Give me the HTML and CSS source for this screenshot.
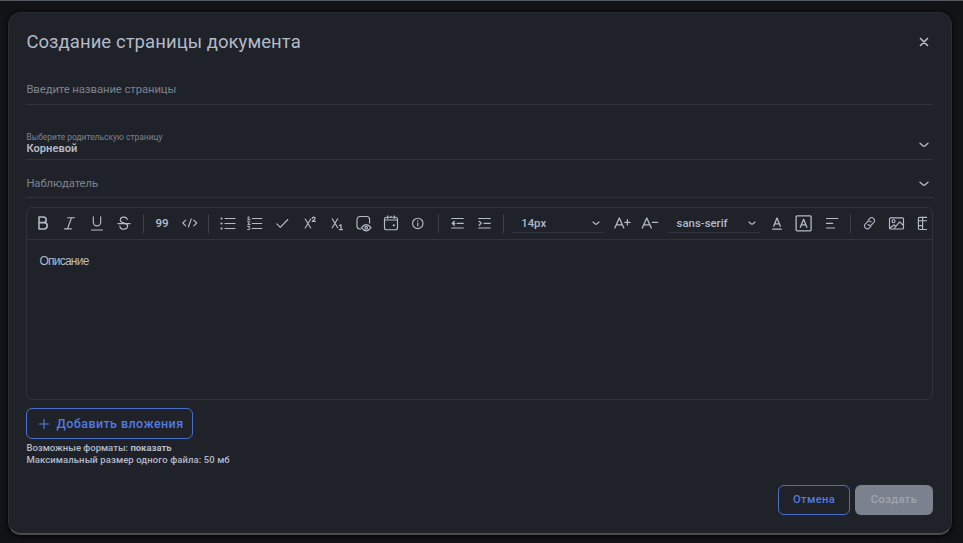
FILE: index.html
```html
<!DOCTYPE html>
<html lang="ru">
<head>
<meta charset="utf-8">
<title>Создание страницы документа</title>
<link rel="stylesheet" href="styles.css">
</head>
<body>
<main class="dialog">
  <header class="header">
    <h1 class="title">Создание страницы документа</h1>
    <svg class="close" viewBox="0 0 10 10"><path d="M1.5 1.5l7 7M8.5 1.5l-7 7"/></svg>
  </header>
  <div class="field field-name"><span class="placeholder name-text">Введите название страницы</span></div>
  <div class="field field-parent">
    <div class="stack"><span class="label">Выберите родительскую страницу</span><span class="value">Корневой</span></div>
    <svg class="chevron" viewBox="0 0 10 6"><path d="M1 1.2l2.6 2.4q1.4 1 2.8 0L9 1.2"/></svg>
  </div>
  <div class="field field-watcher">
    <span class="placeholder watcher-text">Наблюдатель</span>
    <svg class="chevron" viewBox="0 0 10 6"><path d="M1 1.2l2.6 2.4q1.4 1 2.8 0L9 1.2"/></svg>
  </div>
  <section class="editor">
    <div class="toolbar">
      <span class="tool"><svg viewBox="0 0 20 20"><path class="bold" d="M6 4h4.4a2.8 2.8 0 0 1 0 5.6H6zM6 9.6h5a3.2 3.2 0 0 1 0 6.4H6z"/></svg></span>
      <span class="tool"><svg viewBox="0 0 20 20"><path d="M7.5 4.7h7M4.5 15.8h7M11.5 4.7l-4 11.1"/></svg></span>
      <span class="tool"><svg viewBox="0 0 20 20"><path d="M6.3 3.7V9a3.7 3.9 0 0 0 7.4 0V3.7M4.5 17h11"/></svg></span>
      <span class="tool"><svg viewBox="0 0 20 20"><path d="M13.2 6.5C12.8 3.2 6.3 3.2 6.3 7c0 2 1.7 2.7 3.6 3.1 2.2.5 3.7 1.1 3.7 3 0 4-7.4 4.2-7.7 0M4 10.6h12"/></svg></span>
      <i class="sep sep-a"></i>
      <span class="tool quote">99</span>
      <span class="tool"><svg viewBox="0 0 20 20"><path d="M5.7 7.2L2.8 10l2.9 2.8M13.8 7.2l2.9 2.8-2.9 2.8M11.2 6l-2.8 8"/></svg></span>
      <i class="sep sep-b"></i>
      <span class="tool"><svg viewBox="0 0 20 20"><path d="M7 5.5h10M7 10.5h10M7 15.5h10"/><path class="dots" d="M3.5 5.5h.01M3.5 10.5h.01M3.5 15.5h.01"/></svg></span>
      <span class="tool"><svg viewBox="0 0 20 20"><path d="M7.3 5.5h9.5M7.3 10.5h9.5M7.3 15.5h9.5"/><path class="thin" d="M2.6 4.5l1.3-.8v3M2.6 6.8h2.5M2.6 8.8h2.2l-2 2.6h2.4M2.6 13.3h2.2l-1.1 1.4q1.5 0 1.5 1.1t-2.6.8"/></svg></span>
      <span class="tool"><svg viewBox="0 0 20 20"><path d="M4.8 10.8l3.5 3.5 7.5-7.8"/></svg></span>
      <span class="tool"><svg viewBox="0 0 20 20"><path d="M5.2 6l5.5 9M10.7 6l-5.5 9"/><path class="script" d="M12.2 5.4q.2-1.3 1.5-1.3 1.4 0 1.4 1.2 0 .8-2.9 3.1h3.1"/></svg></span>
      <span class="tool"><svg viewBox="0 0 20 20"><path d="M5.2 5.8l5.5 9M10.7 5.8l-5.5 9"/><path class="script" d="M12.5 12.5l1.5-.8v4.8M12.5 16.5h3"/></svg></span>
      <span class="tool"><svg viewBox="0 0 20 20"><path d="M6.7 16H6a3 3 0 0 1-3-3V6.5a3 3 0 0 1 3-3h6.6a3 3 0 0 1 3 3v3.6M7.4 14.7q4.8-6.3 9.6 0-4.8 6.3-9.6 0z"/><circle cx="12.2" cy="14.7" r="1.3"/></svg></span>
      <span class="tool"><svg viewBox="0 0 20 20"><rect x="3.5" y="4.2" width="13" height="12.5" rx="2"/><path d="M3.5 7h13M6.7 2.9v2.6M13.3 2.9v2.6M10 3.2v1"/><path class="dots" d="M12.8 12.3h.01"/></svg></span>
      <span class="tool"><svg viewBox="0 0 20 20"><circle cx="9.8" cy="10.4" r="5.2"/><path d="M9.8 9.9v3M9.8 7.6v.4"/></svg></span>
      <i class="sep sep-c"></i>
      <span class="tool"><svg viewBox="0 0 20 20"><path d="M3.7 5.5h11.6M9 10.3h6.3M3.7 15h11.6M6.4 8.3l-2.2 2 2.2 2M5 10.3h2"/></svg></span>
      <span class="tool"><svg viewBox="0 0 20 20"><path d="M3.7 5.5h11.6M9 10.3h6.3M3.7 15h11.6M4.1 8.3l2.2 2-2.2 2"/></svg></span>
      <i class="sep sep-d"></i>
      <span class="select size"><span class="size-text">14px</span><svg class="caret" viewBox="0 0 8 5"><path d="M1 1l2 1.8q1 .8 2 0L7 1"/></svg></span>
      <span class="tool"><svg viewBox="0 0 20 20"><path class="strong" d="M2.8 15L7.3 5l4.5 10M4.3 11.8h6M12.8 9.3h5.3M15.4 6.7v5.2"/></svg></span>
      <span class="tool"><svg viewBox="0 0 20 20"><path class="strong" d="M3.3 15L7.8 5l4.5 10M4.8 11.8h6M13.3 9.3h5.4"/></svg></span>
      <span class="select family"><span class="family-text">sans-serif</span><svg class="caret" viewBox="0 0 8 5"><path d="M1 1l2 1.8q1 .8 2 0L7 1"/></svg></span>
      <span class="tool"><svg viewBox="0 0 20 20"><path class="strong" d="M6.7 13.2L10 5l3.3 8.2M7.8 10.8h4.4M5.8 16.2h8.4"/></svg></span>
      <span class="tool"><svg viewBox="0 0 20 20"><rect class="strong" x="2.1" y="2.8" width="15" height="15" rx="1"/><path class="strong" d="M6.3 14.3l3.3-8 3.3 8M7.4 11.8h4.4"/></svg></span>
      <span class="tool align"><svg viewBox="0 0 20 20"><path d="M4.5 5.5h11.3M4.5 10.3h6.2M4.5 15h8.2"/></svg></span>
      <i class="sep sep-e"></i>
      <span class="tool"><svg viewBox="0 0 20 20"><path d="M9.2 6.5l1.8-1.8a2.65 2.65 0 0 1 3.8 0l.5.5a2.65 2.65 0 0 1 0 3.8l-2.3 2.3a2.65 2.65 0 0 1-4 0M12.1 13.3l-1.8 1.8a2.65 2.65 0 0 1-3.8 0l-.5-.5a2.65 2.65 0 0 1 0-3.8l2.3-2.3a2.65 2.65 0 0 1 4 0" transform="matrix(.94 0 0 .94 .5 .9)"/></svg></span>
      <span class="tool"><svg viewBox="0 0 20 20"><rect x="3.5" y="4.8" width="14" height="11.2" rx="1"/><circle cx="7.5" cy="8.2" r="1.5"/><path d="M4 15l4.2-3.2 1.7 1.6 3.7-4.5 3.4 3.1M9.9 13.4L8.3 15.2"/></svg></span>
      <span class="tool"><svg viewBox="0 0 20 20"><path d="M18 4.3H6.6a1.2 1.2 0 0 0-1.2 1.2v9.8a1.2 1.2 0 0 0 1.2 1.2H18M5.4 7.7H17M5.4 12.6h4.2M9.6 4.3v12.2"/></svg></span>
    </div>
    <div class="content"><span class="description">Описание</span></div>
  </section>
  <button class="attach"><svg viewBox="0 0 10 10"><path d="M5 .5v9M.5 5h9"/></svg><span class="attach-text">Добавить вложения</span></button>
  <div class="hint"><span class="formats">Возможные форматы: </span><b class="show">показать</b></div>
  <div class="hint"><span class="limit">Максимальный размер одного файла: 50 мб</span></div>
  <footer class="footer"><button class="cancel"><span class="cancel-text">Отмена</span></button><button class="create"><span class="create-text">Создать</span></button></footer>
</main>
</body>
</html>
```
FILE: styles.css
```css
* { box-sizing: border-box; }
body {
  margin: 0;
  height: 543px;
  overflow: hidden;
  padding: 11px 11px 0 8px;
  background: #121316;
  border-top: 1px solid #55585c;
  font-family: Roboto, "Liberation Sans", sans-serif;
  color: #b3bac8;
}
.dialog {
  height: 523px;
  display: flex;
  flex-direction: column;
  padding: 0 18px 0 17.4px;
  background: #1f2229;
  border: 1px solid #292c31;
  border-bottom: 2px solid #4a4c50;
  border-radius: 13px;
  box-shadow: 0 1px 5px #000;
}
svg { fill: none; stroke: currentColor; stroke-width: 1.15; stroke-linecap: round; stroke-linejoin: round; flex: none; }
span { white-space: nowrap; }
.header { height: 58px; display: flex; align-items: center; justify-content: space-between; }
.title { margin: 0; font-size: 18.5px; font-weight: 450; letter-spacing: .06px; }
.close { width: 10px; height: 10px; margin-right: 4.5px; stroke-width: 1.7; }
.field { display: flex; justify-content: space-between; align-items: center; border-bottom: 1px solid #30333b; flex: none; }
.field-name { height: 34px; padding-top: 3px; }
.field-parent { height: 55px; padding-top: 24px; }
.field-parent .chevron { margin-top: 2px; }
.field-watcher { height: 38px; padding-top: 9px; }
.field-watcher .chevron { margin-top: 2px; }
.placeholder { color: #7c828e; font-size: 11.3px; font-weight: 450; letter-spacing: -.08px; }
.stack { display: flex; flex-direction: column; }
.label { color: #7c828e; font-size: 8.4px; line-height: 9px; letter-spacing: .03px; margin: -1px 0 1px; }
.value { font-size: 11.1px; line-height: 12px; font-weight: 600; letter-spacing: .05px; }
.chevron { width: 10px; height: 6px; margin-right: 4px; stroke-width: 1.3; }
.placeholder.watcher-text { letter-spacing: -.1px; }
.editor { height: 193px; flex: none; margin-top: 9px; border: 1px solid #30333b; border-radius: 6px; }
.toolbar { height: 31px; padding-bottom: 1px; display: flex; align-items: center; padding-left: 1.8px; margin-right: 5px; overflow: hidden; }
.tool { width: 27.2px; flex: none; display: flex; justify-content: center; }
.tool svg { width: 20px; height: 20px; }
.tool .bold { stroke-width: 1.55; }
.strong { stroke-width: 1.3; }
.thin { stroke-width: 1; }
.script { stroke-width: 1.25; }
.dots { stroke-width: 2.2; }
.quote { font-size: 11.5px; font-weight: 600; padding-right: 1px; }
.sep { flex: none; height: 19px; width: 11px; background: linear-gradient(#3b3f47, #3b3f47) center / 1px 100% no-repeat; }
.sep-b { width: 11.2px; }
.sep-c { width: 12px; }
.sep-e { width: 10px; }
.select { width: 92px; height: 20px; flex: none; display: flex; align-items: center; justify-content: space-between; padding: 1px 4px 0 9px; border-bottom: 1px solid #30333b; font-size: 11.3px; font-weight: 500; }
.size { margin: 0 4px 0 2.8px; }
.family { margin: 0 4px 0 5px; }
.size-text, .family-text { letter-spacing: .05px; }
.caret { width: 8px; height: 5px; }
.content { height: 160px; border-top: 1px solid #30333b; padding: 13px 12px; font: 12px/16px "Liberation Sans", sans-serif; }
.description { letter-spacing: -.75px; }
button { font: inherit; display: flex; align-items: center; justify-content: center; padding: 0; border-radius: 6px; background: none; }
.attach { width: 167px; height: 31px; flex: none; margin: 8px 0 3px -.4px; padding-left: 4px; gap: 7px; border: 1px solid #496ec5; color: #527be0; font-size: 12.5px; font-weight: 500; letter-spacing: .42px; }
.attach svg { width: 10px; height: 10px; }
.hint { height: 12px; flex: none; font-size: 9.5px; line-height: 12px; font-weight: 500; white-space: pre; }
.formats { letter-spacing: 0; }
.limit { letter-spacing: .09px; }
.show { font-weight: 700; letter-spacing: -.01px; }
.footer { display: flex; justify-content: flex-end; gap: 5px; margin-top: 18.5px; }
.footer button { height: 30px; font-size: 11.2px; font-weight: 500; letter-spacing: .35px; }
.footer .cancel { width: 72px; border: 1px solid #496ec5; color: #527be0; }
.footer .create { width: 78px; border: 0; background: #7b828d; color: #a0a5ae; }
```
